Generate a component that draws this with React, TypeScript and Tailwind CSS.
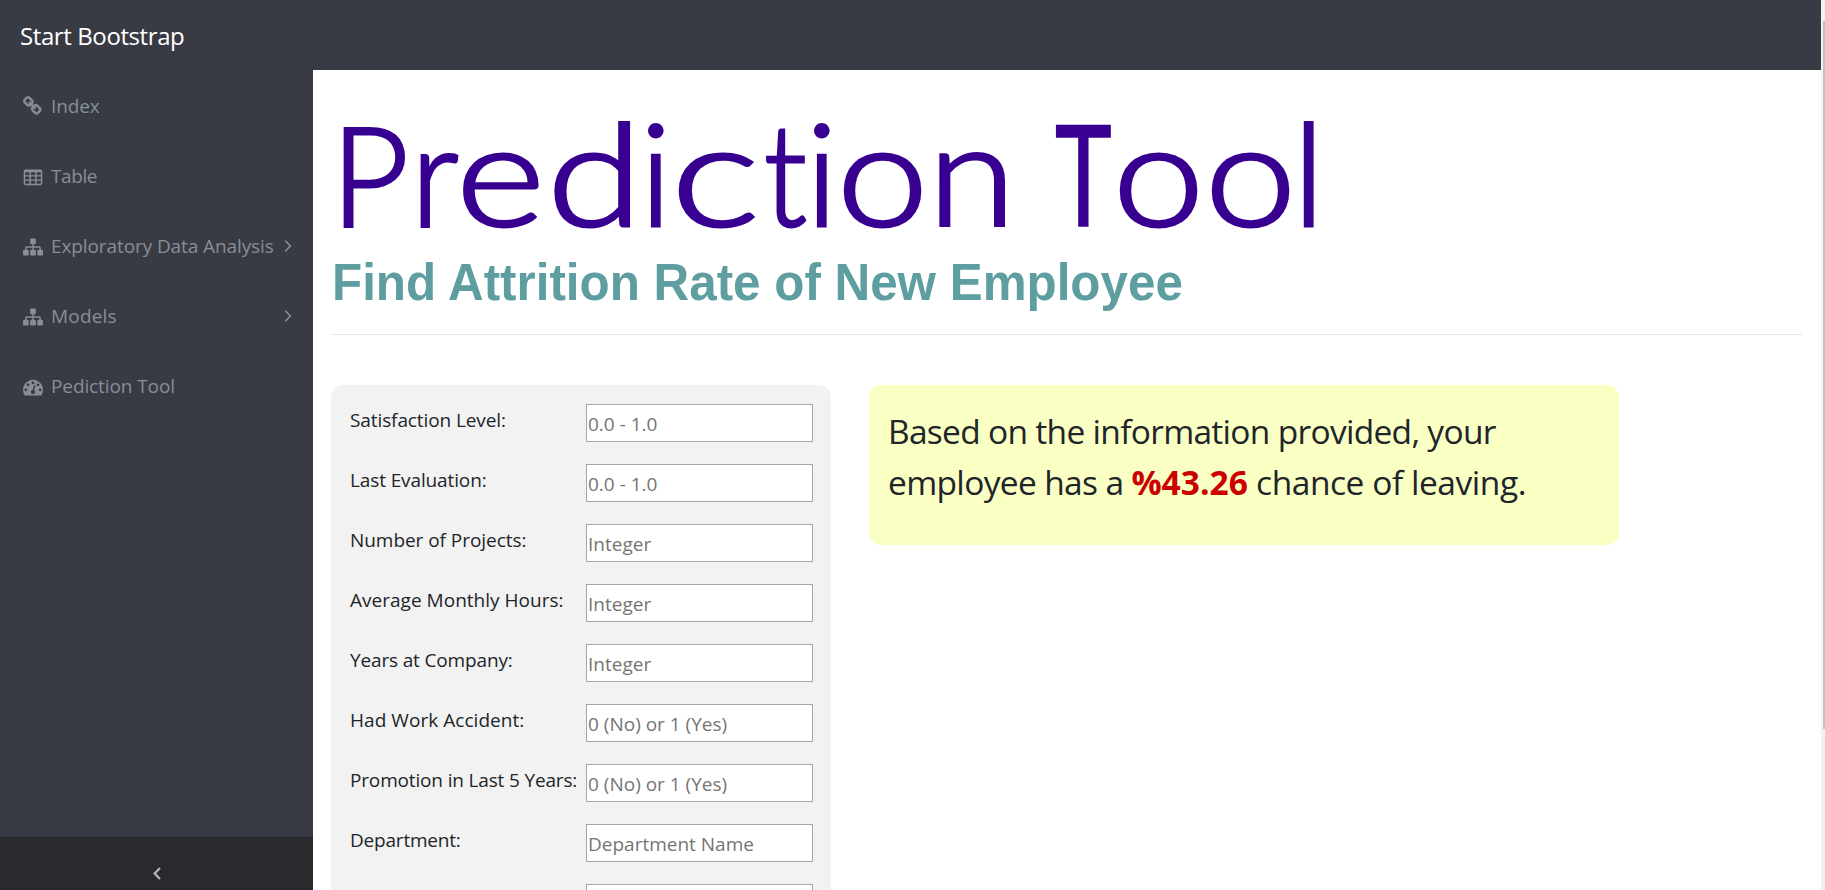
import React from "react";

const LINK =
  "M1456 1216q0-40-28-68l-208-208q-28-28-68-28-42 0-72 32 3 3 19 18.5t21.5 21.5 15 19 13 25.5 3.5 27.5q0 40-28 68t-68 28q-15 0-27.5-3.5t-25.5-13-19-15-21.5-21.5-18.5-19q-33 31-33 73 0 40 28 68l206 207q27 27 68 27 40 0 68-26l147-146q28-28 28-67zm-703-705q0-40-28-68l-206-207q-28-28-68-28-39 0-68 27l-147 146q-28 28-28 67 0 40 28 68l208 208q27 27 68 27 42 0 72-31-3-3-19-18.5t-21.5-21.5-15-19-13-25.5-3.5-27.5q0-40 28-68t68-28q15 0 27.5 3.5t25.5 13 19 15 21.5 21.5 18.5 19q33-31 33-73zm895 705q0 120-85 203l-147 146q-83 83-203 83-121 0-204-85l-206-207q-83-83-83-203 0-123 88-209l-88-88q-86 88-208 88-120 0-204-84l-208-208q-84-84-84-204t85-203l147-146q83-83 203-83 121 0 204 85l206 207q83 83 83 203 0 123-88 209l88 88q86-88 208-88 120 0 204 84l208 208q84 84 84 204z";

const cell = (x: number, y: number) =>
  `M${x + 384} ${y + 224}v-192q0-14-9-23t-23-9h-320q-14 0-23 9t-9 23v192q0 14 9 23t23 9h320q14 0 23-9t9-23z`;

const TABLE =
  [384, 768, 1152].map((y) => [192, 704, 1216].map((x) => cell(x, y)).join("")).join("") +
  "M1728 288v1088q0 66-47 113t-113 47h-1344q-66 0-113-47t-47-113v-1088q0-66 47-113t113-47h1344q66 0 113 47t47 113z";

const SITEMAP =
  "M1792 1248v320q0 40-28 68t-68 28h-320q-40 0-68-28t-28-68v-320q0-40 28-68t68-28h96v-192h-512v192h96q40 0 68 28t28 68v320q0 40-28 68t-68 28h-320q-40 0-68-28t-28-68v-320q0-40 28-68t68-28h96v-192h-512v192h96q40 0 68 28t28 68v320q0 40-28 68t-68 28h-320q-40 0-68-28t-28-68v-320q0-40 28-68t68-28h96v-192q0-52 38-90t90-38h512v-192h-96q-40 0-68-28t-28-68v-320q0-40 28-68t68-28h320q40 0 68 28t28 68v320q0 40-28 68t-68 28h-96v192h512q52 0 90 38t38 90v192h96q40 0 68 28t28 68z";

const dial = (x: number, y: number) =>
  `M${x} ${y}q0-53-37.5-90.5t-90.5-37.5-90.5 37.5-37.5 90.5 37.5 90.5 90.5 37.5 90.5-37.5 37.5-90.5z`;

const GAUGE =
  dial(384, 1152) +
  dial(576, 704) +
  "M1004 1185l101-382q6-26-7.5-48.5t-38.5-29.5-48 6.5-30 39.5l-101 382q-60 5-107 43.5t-63 98.5q-20 77 20 146t117 89 146-20 89-117q16-60-6-117t-72-91z" +
  dial(1664, 1152) +
  dial(1024, 512) +
  dial(1472, 704) +
  "M1792 1152q0 261-141 483-19 29-54 29h-1402q-35 0-54-29-141-221-141-483 0-182 71-348t191-286 286-191 348-71 348 71 286 191 191 286 71 348z";

const NAV = [
  { label: "Index", icon: LINK, more: false, box: "-mt-px stroke-current stroke-[40]", text: "tracking-[-0.1px]" },
  { label: "Table", icon: TABLE, more: false, box: "mt-1", text: "tracking-[-0.4px]" },
  { label: "Exploratory Data Analysis", icon: SITEMAP, more: true, box: "mt-0.5", text: "tracking-[-0.1px]" },
  { label: "Models", icon: SITEMAP, more: true, box: "mt-0.5", text: "tracking-[0.2px]" },
  { label: "Pediction Tool", icon: GAUGE, more: false, box: "mt-0.5", text: "tracking-[-0.1px]" },
];

const FIELDS = [
  { label: "Satisfaction Level:", hint: "0.0 - 1.0", text: "tracking-[-0.1px]" },
  { label: "Last Evaluation:", hint: "0.0 - 1.0", text: "tracking-[-0.12px]" },
  { label: "Number of Projects:", hint: "Integer", text: "tracking-[-0.05px]" },
  { label: "Average Monthly Hours:", hint: "Integer", text: "tracking-[0.02px]" },
  { label: "Years at Company:", hint: "Integer", text: "tracking-[-0.15px]" },
  { label: "Had Work Accident:", hint: "0 (No) or 1 (Yes)", text: "tracking-[0.05px]" },
  { label: "Promotion in Last 5 Years:", hint: "0 (No) or 1 (Yes)", text: "tracking-[-0.16px]" },
  { label: "Department:", hint: "Department Name", text: "tracking-[-0.2px]" },
  { label: "", hint: "", text: "" },
];

const TITLE = [
  { ch: "P", slot: "w-[80px] pt-0.5 text-[139px]", shape: "scale-x-[0.97]" },
  { ch: "r", slot: "w-[45px]", shape: "scale-x-[0.95]" },
  { ch: "e", slot: "w-[91px]", shape: "scale-x-[1.2]" },
  { ch: "d", slot: "w-[93px]", shape: "scale-x-[1.22]" },
  { ch: "i", slot: "w-[31px]", shape: "scale-x-100" },
  { ch: "c", slot: "w-[93px]", shape: "scale-x-[1.32]" },
  { ch: "t", slot: "w-[42px]", shape: "scale-x-[0.88]" },
  { ch: "i", slot: "w-[31px]", shape: "scale-x-100" },
  { ch: "o", slot: "w-[91px]", shape: "scale-x-[1.15]" },
  { ch: "n", slot: "w-[127px]", shape: "scale-x-[1.12]" },
  { ch: "T", slot: "w-[58px] pt-0.5 text-[139px] font-normal [-webkit-text-stroke:1.5px_#380091]", shape: "scale-x-[0.69]" },
  { ch: "o", slot: "w-[92px]", shape: "scale-x-[1.15]" },
  { ch: "o", slot: "w-[88px]", shape: "scale-x-[1.15]" },
  { ch: "l", slot: "w-[30px]", shape: "scale-x-100" },
];

function Sidebar() {
  return (
    <nav className="flex w-[313px] shrink-0 flex-col bg-[#393b44] text-[#868e96]">
      <ul className="pt-px">
        {NAV.map((item) => (
          <li key={item.label} className="flex h-[70px] items-center pr-5 pl-[23px]">
            <svg viewBox="0 0 1792 1792" className={`size-5 shrink-0 fill-current ${item.box}`}>
              <path d={item.icon} />
            </svg>
            <span className={`ml-2 whitespace-nowrap text-[19px] leading-[30px] ${item.text}`}>{item.label}</span>
            {item.more && (
              <svg viewBox="0 0 8 12" className="mr-px ml-auto h-3 w-2 shrink-0 fill-none stroke-current stroke-[1.6]">
                <path d="M1.2 .8L6.4 6L1.2 11.2" />
              </svg>
            )}
          </li>
        ))}
      </ul>
      <div className="mt-auto flex h-[53px] justify-center bg-[#292a2e] pt-[30px]">
        <svg viewBox="0 0 8 13" className="h-[13px] w-2 fill-none stroke-[#adb0b9] stroke-[2.4]">
          <path d="M7 1L1.7 6.5L7 12" />
        </svg>
      </div>
    </nav>
  );
}

function PredictionForm() {
  return (
    <form className="flex h-[650px] w-[500px] shrink-0 flex-col gap-[22px] rounded-xl bg-[#f2f2f2] px-[18px] pt-[19px]">
      {FIELDS.map((f, i) => (
        <label key={i} className="flex h-[38px] shrink-0 justify-between">
          <span className={`mt-[1px] ml-px whitespace-nowrap text-[19px] leading-[30px] text-[#212529] ${f.text}`}>{f.label}</span>
          <input
            placeholder={f.hint}
            className="h-[38px] w-[227px] border border-[#a6a6a6] bg-white px-px pt-px text-[19px] placeholder:text-[#757575]"
          />
        </label>
      ))}
    </form>
  );
}

export default function App() {
  return (
    <div className="flex h-[890px] w-[1825px] overflow-hidden bg-white font-['Open_Sans','Noto_Sans',sans-serif]">
      <div className="flex min-w-0 flex-1 flex-col">
        <header className="flex h-[70px] shrink-0 items-center bg-[#393b44] pl-5">
          <span className="mt-0.5 whitespace-nowrap text-[24px] tracking-[-0.4px] text-white">Start Bootstrap</span>
        </header>
        <div className="flex min-h-0 flex-1">
          <Sidebar />
          <main className="min-w-0 flex-1 overflow-hidden pr-[19px] pl-[18px]">
            <h1 className="flex h-[176px] pt-[17px] font-['Lato',sans-serif] text-[142px] leading-[168px] font-light text-[#380091] [-webkit-text-stroke:3px_#380091]">
              {TITLE.map((g, i) => (
                <span key={i} className={`shrink-0 ${g.slot}`}>
                  <span className={`inline-block origin-left ${g.shape}`}>{g.ch}</span>
                </span>
              ))}
            </h1>
            <h2 className="h-[89px] border-b border-[#e5e5e5] pt-[3px] pl-px font-['Liberation_Sans',sans-serif] text-[52px] leading-[66px] font-bold text-[#5f9ea0]">
              <span className="inline-block origin-left scale-x-[0.949] whitespace-nowrap">
                Find Attrition Rate of New Employee
              </span>
            </h2>
            <div className="mt-[50px] flex items-start">
              <PredictionForm />
              <section className="ml-[38px] h-[160px] w-[750px] rounded-xl bg-[#faffc4] px-[19px] pt-[21px] text-[33.5px] leading-[51px] text-[#212529]">
                <p className="whitespace-nowrap tracking-[-0.7px]">Based on the information provided, your</p>
                <p className="whitespace-nowrap tracking-[-0.45px]">
                  <span className="tracking-[-0.65px]">employee has a </span>
                  <b className="tracking-[0px] text-[#cc0000]">%43.26</b> chance of leaving.
                </p>
              </section>
            </div>
          </main>
        </div>
      </div>
      <div className="flex w-1 shrink-0 flex-col items-end bg-[#f1f1f1] pt-[21px]">
        <div className="h-[708px] w-0.5 bg-[#c1c1c1]" />
      </div>
    </div>
  );
}
